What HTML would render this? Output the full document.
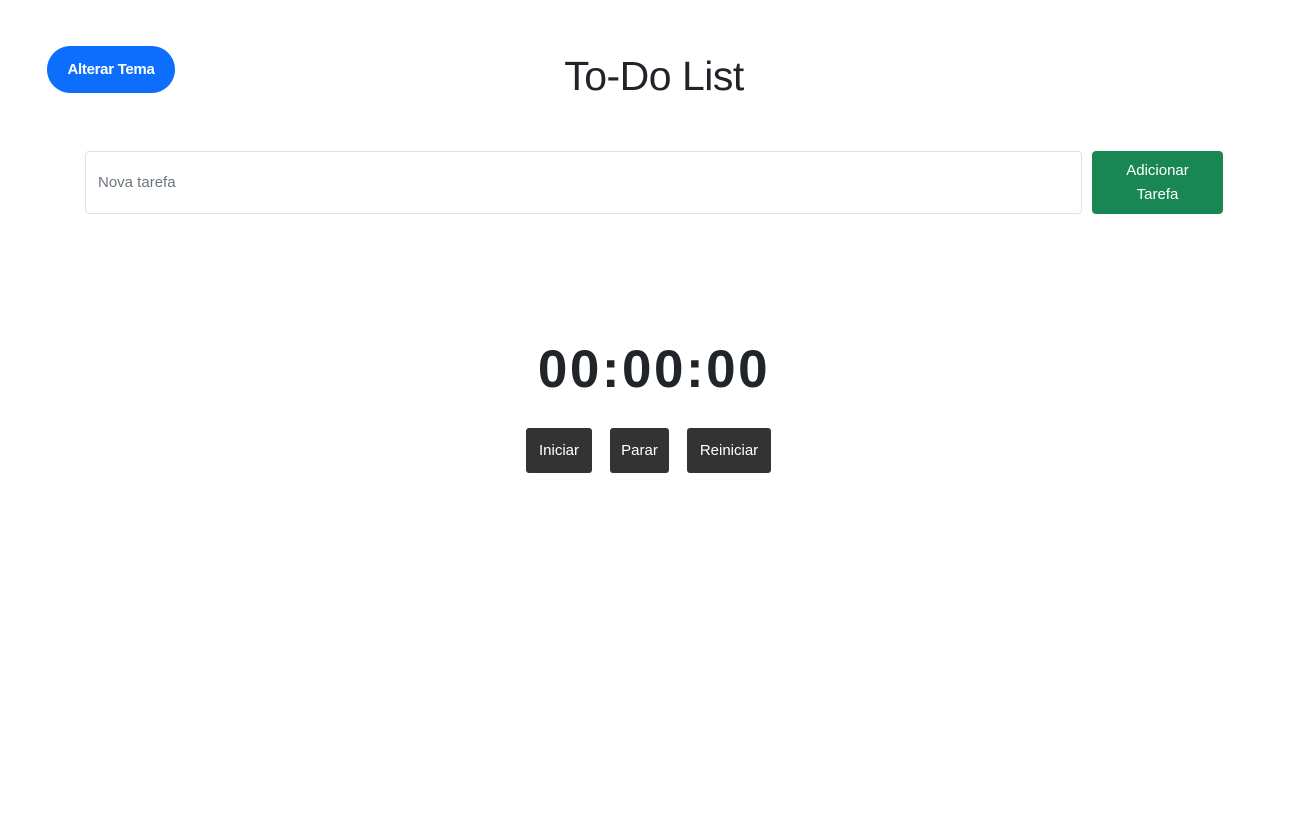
<!DOCTYPE html>
<html><head><meta charset="utf-8"><style>
body{margin:0;width:1308px;height:816px;background:#fff;font-family:"Liberation Sans",sans-serif;position:relative;color:#212529}
.a{position:absolute}
#theme{left:47px;top:46px;width:128px;height:47px;border-radius:24px;background:#0d6efd;color:#fff;font-weight:bold;font-size:15px;display:flex;align-items:center;justify-content:center;letter-spacing:-0.3px}
h1{position:absolute;left:0;width:1308px;top:53px;margin:0;text-align:center;font-weight:normal;font-size:41px;line-height:46px;letter-spacing:-0.5px}
#inp{left:85px;top:151px;width:997px;height:63px;border:1px solid #dee2e6;border-radius:4px;box-sizing:border-box;}
#inp span{position:absolute;left:12px;top:22px;font-size:15px;color:#6c757d}
#add{left:1092px;top:151px;width:131px;height:63px;background:#198754;border-radius:4px;color:#fff;font-size:15px;text-align:center;line-height:24px;display:flex;align-items:center;justify-content:center}
#t{left:0;width:1308px;top:340px;text-align:center;font-size:53px;font-weight:bold;line-height:60px;letter-spacing:2.5px}
.b{top:428px;height:45px;background:#333;color:#fff;font-size:15px;border-radius:3px;display:flex;align-items:center;justify-content:center}
</style></head><body>
<div id="theme" class="a">Alterar Tema</div>
<h1>To-Do List</h1>
<div id="inp" class="a"><span>Nova tarefa</span></div>
<div id="add" class="a">Adicionar<br>Tarefa</div>
<div id="t" class="a">00:00:00</div>
<div class="a b" style="left:526px;width:66px">Iniciar</div>
<div class="a b" style="left:610px;width:59px">Parar</div>
<div class="a b" style="left:687px;width:84px">Reiniciar</div>
</body></html>
